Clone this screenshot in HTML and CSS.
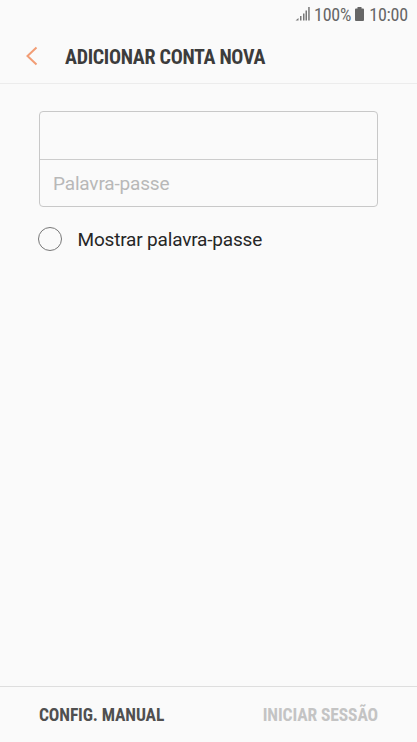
FILE: index.html
```html
<!DOCTYPE html>
<html lang="pt">
<head>
<meta charset="utf-8">
<title>Adicionar conta nova</title>
<link rel="stylesheet" href="styles.css">
</head>
<body>
<div class="status">
  <svg class="signal" width="16" height="14" viewBox="0 0 16 14"><path d="M0.500 13.500L3.500 11v2.500zM5 9h1.500v4.500H5zM8 6.500h1.500v7H8zM10.500 3.500H12v10h-1.500zM13.200 0h1.500v13.500h-1.500z"/></svg>
  <span class="percent">100%</span>
  <svg class="battery" width="9" height="14" viewBox="0 0 9 14"><path d="M2.500 0h4v1.500H8a1 1 0 0 1 1 1V13a1 1 0 0 1-1 1H1a1 1 0 0 1-1-1V2.500a1 1 0 0 1 1-1h1.500z"/></svg>
  <span class="time">10:00</span>
</div>
<header class="header">
  <svg class="back" width="12" height="20" viewBox="0 0 12 20"><path d="M10.500 1.500L1.500 10l9 8.500"/></svg>
  <h1 class="title">ADICIONAR CONTA NOVA</h1>
</header>
<main class="main">
  <div class="fields">
    <div class="field"></div>
    <div class="field">Palavra-passe</div>
  </div>
  <div class="option"><span class="circle"></span><span>Mostrar palavra-passe</span></div>
</main>
<footer class="footer"><span class="manual">CONFIG. MANUAL</span><span class="signin">INICIAR SESSÃO</span></footer>
</body>
</html>
```

FILE: styles.css
```css
* { box-sizing: border-box; }
body { margin: 0; height: 742px; display: flex; flex-direction: column; background: #fafafa; font-family: Roboto, sans-serif; overflow: hidden; }
span, h1 { white-space: nowrap; }
.status { height: 28px; display: flex; align-items: center; justify-content: flex-end; padding-right: 9px; font-size: 18px; font-stretch: condensed; letter-spacing: -0.2px; color: #666; }
.signal { fill: #777; margin-right: 3px; }
.battery { fill: #666; margin: 0 5px 0 4px; }
.header { height: 56px; display: flex; align-items: center; border-bottom: 1px solid #ececec; padding-left: 26px; }
.back { fill: none; stroke: #f29d75; stroke-width: 2; margin-right: 27px; }
.title { margin: 0; padding-top: 2px; font-size: 20px; font-weight: 700; color: #3c3c3c; font-stretch: condensed; letter-spacing: -0.3px; }
.main { flex: 1; padding: 27px 39px 0 39px; }
.fields { border: 1px solid #c8c8c8; border-radius: 4px; height: 96px; }
.field { height: 47px; padding-left: 13px; display: flex; align-items: center; font-size: 19px; letter-spacing: -0.17px; color: #b8b8b8; }
.field + .field { border-top: 1px solid #ccc; }
.option { display: flex; align-items: center; margin-top: 20px; margin-left: -1px; height: 25px; font-size: 19px; letter-spacing: -0.18px; color: #262626; }
.circle { width: 24px; height: 24px; border: 1.5px solid #777; border-radius: 50%; margin: -1px 15.500px 0 0; }
.footer { height: 56px; border-top: 1px solid #dedede; padding: 0 39px; display: flex; align-items: center; justify-content: space-between; font-size: 17.5px; font-weight: 700; font-stretch: condensed; color: #505050; letter-spacing: -0.12px; }
.signin { color: #c4c4c4; }
```
